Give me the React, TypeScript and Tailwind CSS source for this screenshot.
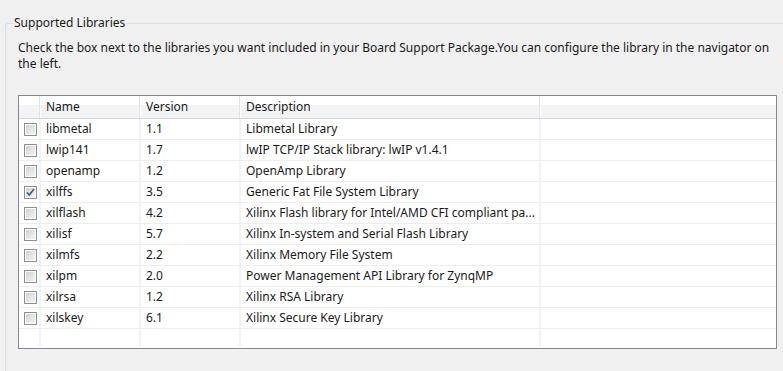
import React from 'react';

const libraries = [
  { name: 'libmetal', version: '1.1', description: 'Libmetal Library', checked: false },
  { name: 'lwip141', version: '1.7', description: 'lwIP TCP/IP Stack library: lwIP v1.4.1', checked: false },
  { name: 'openamp', version: '1.2', description: 'OpenAmp Library', checked: false },
  { name: 'xilffs', version: '3.5', description: 'Generic Fat File System Library', checked: true },
  { name: 'xilflash', version: '4.2', description: 'Xilinx Flash library for Intel/AMD CFI compliant pa...', checked: false },
  { name: 'xilisf', version: '5.7', description: 'Xilinx In-system and Serial Flash Library', checked: false },
  { name: 'xilmfs', version: '2.2', description: 'Xilinx Memory File System', checked: false },
  { name: 'xilpm', version: '2.0', description: 'Power Management API Library for ZynqMP', checked: false },
  { name: 'xilrsa', version: '1.2', description: 'Xilinx RSA Library', checked: false },
  { name: 'xilskey', version: '6.1', description: 'Xilinx Secure Key Library', checked: false },
];

function Checkbox({ checked }: { checked: boolean }) {
  return (
    <div className="w-[13px] h-[13px] border border-[#8e8f8f] bg-white p-[1px]">
      <div className="relative w-full h-full bg-gradient-to-br from-[#d2d2d2] to-[#f4f4f4]">
        {checked && (
          <svg className="absolute inset-0" width="9" height="9" viewBox="0 0 9 9">
            <path d="M1 4.5 L3.3 7 L8 1" fill="none" stroke="#3d5a99" strokeWidth="1.6" />
          </svg>
        )}
      </div>
    </div>
  );
}

function HeaderCell({ label, className }: { label?: string; className: string }) {
  return (
    <div className={`${className} h-full flex items-center pl-[6px] border-r border-[#e2e2e2] shadow-[1px_0_0_#ffffff]`}>
      {label}
    </div>
  );
}

export default function App() {
  return (
    <div
      className="w-[783px] h-[371px] overflow-hidden bg-[#f0f0f0] text-[12px] text-[#1a1a1a]"
      style={{ fontFamily: '"Noto Sans", "Open Sans", sans-serif' }}
    >
      <div className="relative mt-[23px] ml-[5px] h-[400px] border-l border-t border-[#d5dfe5] rounded-tl-[3px]">
        <div className="absolute -top-[10px] left-[7px] bg-[#f0f0f0] px-[1px] leading-[18px]">
          Supported Libraries
        </div>

        <p className="pl-[12px] pr-[4px] pt-[16px] leading-[16px] w-[770px]">
          Check the box next to the libraries you want included in your Board Support Package.You can configure the library in the navigator on the left.
        </p>

        <div className="ml-[12px] mt-[23px] w-[759px] h-[254px] border border-[#828790] bg-white flex flex-col">
          <div className="h-[23px] flex bg-[linear-gradient(to_bottom,#ffffff_0%,#ffffff_40%,#f3f4f6_41%,#f1f2f4_100%)] border-b border-[#d5d5d5]">
            <HeaderCell className="w-[21px]" />
            <HeaderCell className="w-[100px]" label="Name" />
            <HeaderCell className="w-[100px]" label="Version" />
            <HeaderCell className="w-[300px]" label="Description" />
            <div className="flex-1" />
          </div>

          <div className="flex-1">
            {libraries.map((lib) => (
              <div key={lib.name} className="h-[21px] flex border-b border-[#ededed]">
                <div className="w-[22px] flex items-center justify-center pl-[2px] pt-[1px] border-r-2 border-[#eef2f9]">
                  <Checkbox checked={lib.checked} />
                </div>
                <div className="w-[100px] flex items-center pl-[5px] border-r-2 border-[#eef2f9]">{lib.name}</div>
                <div className="w-[100px] flex items-center pl-[5px] border-r-2 border-[#eef2f9]">{lib.version}</div>
                <div className="w-[300px] flex items-center pl-[5px] border-r-2 border-[#eef2f9] whitespace-nowrap">
                  {lib.description}
                </div>
                <div className="flex-1" />
              </div>
            ))}
            <div className="h-[17px] flex">
              <div className="w-[22px] border-r-2 border-[#eef2f9]" />
              <div className="w-[100px] border-r-2 border-[#eef2f9]" />
              <div className="w-[100px] border-r-2 border-[#eef2f9]" />
              <div className="w-[300px] border-r-2 border-[#eef2f9]" />
            </div>
          </div>
        </div>
      </div>
    </div>
  );
}
